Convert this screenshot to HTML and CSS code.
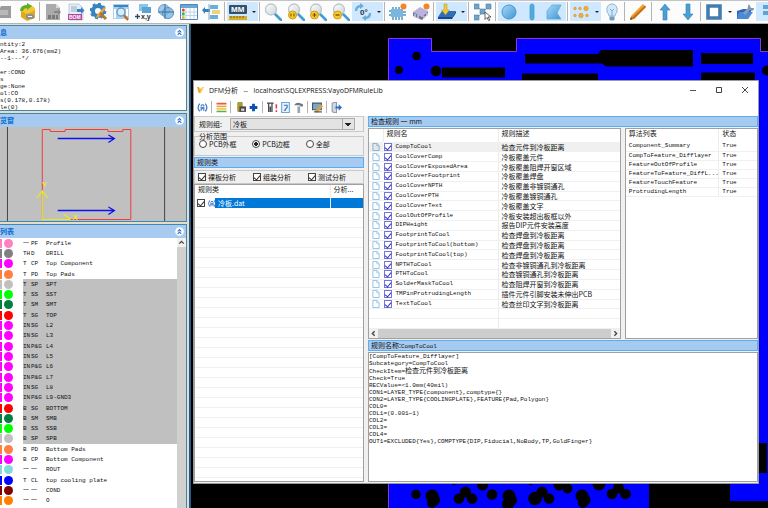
FILE: index.html
```
<!DOCTYPE html>
<html lang="zh-CN">
<head>
    <meta charset="UTF-8">
    <meta name="viewport" content="width=device-width, initial-scale=1.0">
    <title>DFM分析</title>
    <link rel="stylesheet" href="styles.css">
</head>
<body>
    <svg class="defs" width="0" height="0" aria-hidden="true">
        <linearGradient id="lens" x1="0" y1="0" x2="1" y2="1"><stop offset="0" stop-color="#fff"/><stop offset="1" stop-color="#c9d3da"/></linearGradient>
        <linearGradient id="blue" x1="0" y1="0" x2="1" y2="1"><stop offset="0" stop-color="#a9dbf8"/><stop offset="1" stop-color="#3f93d0"/></linearGradient>
        <symbol id="mag" viewBox="0 0 18 18"><path d="M11 11l6 6" stroke="#3f9fd3" stroke-width="2.6" stroke-linecap="round"/><circle cx="7" cy="6.500" r="5.500" fill="url(#lens)" stroke="#bfc4c6" stroke-width="1.300"/></symbol>
        <symbol id="page" viewBox="0 0 8 9"><path d="M.5.5h4.500l2.500 2.500v5.500h-7z" fill="#fff" stroke="#86bce6"/><path d="M4.800.5v2.700h2.700" fill="none" stroke="#86bce6" stroke-width=".7"/></symbol>
        <symbol id="signal" viewBox="0 0 10 10"><path d="M2.500 1.500Q-.5 5 2.500 8.500M7.500 1.500Q10.500 5 7.500 8.500M3.800 8V4M6.200 8V4M3.500 3.500Q5 1.500 6.500 3.500" fill="none" stroke="#3c78c8" stroke-width="1.100"/><circle cx="5" cy="5.500" r="1" fill="#4a7ab8"/></symbol>
        <symbol id="up2" viewBox="0 0 9 9"><circle cx="4.500" cy="4.500" r="4.300" fill="#fff"/><path d="M2.700 4.300l1.800-1.800 1.800 1.800M2.700 6.800l1.800-1.800 1.800 1.800" fill="none" stroke="#2f76c8" stroke-width="1.100"/></symbol>
    </svg>

    <header class="toolbar">
        <button class="tool" aria-label="Open"><svg viewBox="0 0 18 18"><path d="M0 5h5l1-2h10v12H0z" fill="#9c9c9c"/><path d="M5 7h8v5H5z" fill="#b9b9b9"/></svg></button>
        <button class="tool" aria-label="Import"><svg viewBox="0 0 18 18"><path d="M3 6l4-4h6l4 3v9l-8 3-6-3z" fill="#f5c832"/><path d="M3 8l6 3 8-4v8l-8 3-6-4z" fill="#e3a91c"/><path d="M2 8q0-6 7-6V0l5 3-5 4V5q-3 0-4 3z" fill="#57b02e"/><rect x="8" y="11" width="8" height="5" rx="2" fill="#8a9197"/><path d="M10 13.500h4" stroke="#fff"/></svg></button>
        <span class="sep"></span>
        <button class="tool" aria-label="CAD"><svg viewBox="0 0 18 18"><path d="M2 1h10l4 4v12H2z" fill="#ababab"/><path d="M12 1v4h4" fill="#d8d8d8"/><path d="M10 8h4v-2l3 3-3 3v-2h-4z" fill="#888"/><path d="M4 14h10" stroke="#7a7a7a" stroke-width="4" stroke-dasharray="3 1"/></svg></button>
        <button class="tool" aria-label="BOM"><svg viewBox="0 0 18 18"><path d="M2 1h10l4 4v12H2z" fill="#e5edf7" stroke="#9fb4cc" stroke-width=".6"/><path d="M4 4h6M4 6h6M4 8h6" stroke="#96abc5"/><path d="M10 6h4V4l3.500 3.500L14 11V9h-4z" fill="#3d7fc6"/><path d="M1 11h14v6H1z" fill="#b2489b"/><text x="2" y="16" class="icon-text light">BOM</text></svg></button>
        <button class="tool" aria-label="Settings"><svg viewBox="0 0 18 18"><circle cx="8" cy="8" r="5" fill="none" stroke="#3583c2" stroke-width="4"/><circle cx="8" cy="8" r="7.300" fill="none" stroke="#3583c2" stroke-width="2" stroke-dasharray="3 2.700"/><path d="M16 5L9 14l-3 1 1-3 7-8z" fill="#f2a334"/><path d="M10 10l6 6" stroke="#b37732" stroke-width="3"/></svg></button>
        <button class="tool" aria-label="Search"><svg viewBox="0 0 18 18"><path d="M1 1h16v15H1z" fill="#a9d0ec"/><path d="M2 2h14v2H2z" fill="#3e83bb"/><path d="M2 6h2v9H2zM14 6h2v7h-2z" fill="#fff"/><path d="M11 11l5 6" stroke="#c06b23" stroke-width="2.200"/><circle cx="9" cy="9" r="4" fill="#d9eefa" stroke="#5c9dc9" stroke-width="1.300"/></svg></button>
        <button class="tool" aria-label="X,Y"><svg viewBox="0 0 18 18"><path d="M4 1h9v7H4z" fill="#8fc4ea"/><path d="M7 4h9v6H7z" fill="#5ca3d8"/><path d="M0 13.500h5M2.500 11v5" stroke="#234a73" stroke-width="1.300"/><text x="6" y="16" class="icon-text dark mid">x,y</text></svg></button>
        <button class="tool" aria-label="Origin"><svg viewBox="0 0 18 18"><circle cx="7" cy="7" r="5.500" fill="#a1c8e8" stroke="#6fa3cf"/><circle cx="11" cy="10" r="5.500" fill="#7fb4de" fill-opacity=".8" stroke="#5a93c5"/><path d="M8 1v15M1 9h16" stroke="#39719f"/></svg></button>
        <button class="tool" aria-label="Table"><svg viewBox="0 0 18 18"><path d="M.5 1.500h17v15H.5z" fill="#fff" stroke="#4b87b9"/><path d="M1 2h16v3H1z" fill="#6ca7d4"/><path d="M6 5v11M10 5v11M14 5v11M1 9h16M1 12.500h16" stroke="#b0cce3" stroke-width=".8"/><circle cx="3.300" cy="7" r="1.500" fill="#e93e32"/><circle cx="3.300" cy="10.700" r="1.500" fill="#47ae3c"/><circle cx="3.300" cy="14.500" r="1.500" fill="#f3ad24"/></svg></button>
        <button class="tool" aria-label="Arrange"><svg viewBox="0 0 18 18"><path d="M8 2h8v4H8zM8 12h8v4H8z" fill="#66afe0"/><path d="M10 7h8v4h-8z" fill="#f0d27c"/><path d="M0 7l3-3v2h5v3H3v2z" fill="#2e84c3"/><path d="M7 1v16" stroke="#89a5bb"/></svg></button>
        <span class="sep"></span>
        <button class="split active" aria-label="MM"><svg viewBox="0 0 18 18"><rect x="0" y="2" width="18" height="9" rx="1" fill="#30506e"/><text x="2" y="9" class="icon-text light big">MM</text><path d="M0 13h18v4H0z" fill="#d8ae2c"/><path d="M2 13v2M5 13v2M8 13v2M11 13v2M14 13v2" stroke="#7b6012"/></svg><i class="caret"></i></button>
        <span class="sep"></span>
        <button class="tool" aria-label="Zoom"><svg><use href="#mag"/></svg></button>
        <button class="tool" aria-label="Zoom 1:1"><svg viewBox="0 0 18 18"><use href="#mag"/><circle cx="5.500" cy="12" r="4" fill="#f6c92b" stroke="#d49c14"/><path d="M4 10.500v3M7 10.500v3" stroke="#71500b"/></svg></button>
        <button class="tool" aria-label="Zoom in"><svg viewBox="0 0 18 18"><use href="#mag"/><circle cx="5.500" cy="12" r="4" fill="#f6c92b" stroke="#d49c14"/><path d="M3.500 12h4M5.500 10v4" stroke="#71500b" stroke-width="1.200"/></svg></button>
        <button class="tool" aria-label="Zoom out"><svg viewBox="0 0 18 18"><use href="#mag"/><circle cx="5.500" cy="12" r="4" fill="#f6c92b" stroke="#d49c14"/><path d="M3.500 12h4" stroke="#71500b" stroke-width="1.300"/></svg></button>
        <button class="split active" aria-label="Rotate"><svg viewBox="0 0 18 18"><path d="M2 8q0-5 5-5M16 10q0 5-5 5" fill="none" stroke="#6aaed8" stroke-width="2.400"/><path d="M6 0l4 3-4 3zM12 12l-4 3 4 3z" fill="#6aaed8"/><text x="6" y="12" class="icon-text dark big">0°</text></svg><i class="caret"></i></button>
        <span class="sep"></span>
        <button class="tool" aria-label="Component"><svg viewBox="0 0 18 18"><path d="M2 6h12v8H2z" fill="#79b7de"/><path d="M4 4v2M7 4v2M10 4v2M4 14v3M7 14v3M10 14v3M13 14v3M0 8h2M0 12h2M14 9h3M14 12h3" stroke="#4f94c4" stroke-width="1.500"/><circle cx="14.500" cy="3.500" r="3" fill="#f58428"/></svg></button>
        <button class="tool" aria-label="Chip"><svg viewBox="0 0 18 18"><path d="M1 9l7-5 8 4-6 6z" fill="#b9b3de"/><path d="M1 9l9 5v3l-9-4zM10 14l6-6v3l-6 6z" fill="#76719f"/><path d="M3 11v4M6 12v4M12 13v3M15 10v3" stroke="#d7d9e2" stroke-width="1.300"/><circle cx="14.500" cy="3.500" r="3" fill="#f58428"/></svg></button>
        <span class="sep"></span>
        <button class="split active" aria-label="Layer"><svg viewBox="0 0 18 18"><path d="M4 8h14l-4 6H0z" fill="#2f6dbd"/><path d="M0 14h14l4-6v2l-4 6H0z" fill="#1b4886"/><path d="M6 1h3v6h2.500L7.500 12l-4-5H6z" fill="#f2ca35" stroke="#b3902a" stroke-width=".5"/></svg><i class="caret"></i></button>
        <span class="sep"></span>
        <button class="tool" aria-label="Select"><svg viewBox="0 0 18 18"><path d="M3 3l12 12M15 3L3 15" stroke="#a0b5c5"/><path d="M0 1h5v5H0zM12 1h5v5h-5zM0 12h5v5H0zM6 6h5v5H6z" fill="#70a4c8" stroke="#4b7fa5" stroke-width=".6"/><path d="M11 9l6 5h-3l2 3-1.500.5-1.500-3-2 2z" fill="#fff" stroke="#444" stroke-width=".8"/></svg></button>
        <span class="sep"></span>
        <button class="tool active" aria-label="Circle"><svg viewBox="0 0 18 18"><circle cx="9" cy="9" r="7" fill="url(#blue)" stroke="#4795cf"/></svg></button>
        <button class="tool active" aria-label="Line"><svg viewBox="0 0 18 18"><rect x="7" y="1" width="4" height="16" rx="2" fill="#50ace0" stroke="#4395c8" stroke-width=".7"/></svg></button>
        <button class="tool active" aria-label="Polygon"><svg viewBox="0 0 18 18"><path d="M7 2h9l-4 8 4 6H2V8z" fill="url(#blue)" stroke="#5da9dc" stroke-width=".8"/></svg></button>
        <span class="sep"></span>
        <button class="split active" aria-label="Pads"><svg viewBox="0 0 18 18"><g fill="#f4ad33" stroke="#d18b1a" stroke-width=".5"><circle cx="3" cy="5.500" r="1.300"/><circle cx="8" cy="5.500" r="1.300"/><circle cx="14" cy="5.500" r="2.200"/><circle cx="3" cy="12.500" r="1.300"/><circle cx="9" cy="12.500" r="2.200"/><circle cx="15" cy="12.500" r="1.300"/></g></svg><i class="caret"></i></button>
        <button class="tool" aria-label="Light"><svg viewBox="0 0 18 18"><path d="M6 13q0-2-2-4-1-8 5-8t5 8q-2 2-2 4z" fill="#d3e8f9" stroke="#8fb9dc"/><path d="M6.500 13.500h5v3l-1 1h-3l-1-1z" fill="#6f9cc0"/><path d="M7 6l2 2 2-2M9 8v5" fill="none" stroke="#82a9cb"/></svg></button>
        <span class="sep"></span>
        <button class="tool" aria-label="Draw"><svg viewBox="0 0 18 18"><path d="M2 13L14 1l3 3L5 16l-4 1z" fill="#f3a02b"/><path d="M5 16L17 4l-1-1.500L3 14.500z" fill="#c3701a"/><path d="M1 17l1-3 2 2z" fill="#5a4630"/></svg></button>
        <span class="sep"></span>
        <button class="tool" aria-label="Up"><svg viewBox="0 0 18 18"><path d="M9 1l5 6h-3v10H7V7H4z" fill="#4a9fd5" stroke="#347fb1" stroke-width=".6"/></svg></button>
        <button class="tool" aria-label="Down"><svg viewBox="0 0 18 18"><path d="M9 17l5-6h-3V1H7v10H4z" fill="#4a9fd5" stroke="#347fb1" stroke-width=".6"/></svg></button>
        <span class="sep"></span>
        <button class="split" aria-label="Frame"><svg viewBox="0 0 18 18"><path d="M3 3h12v12H3z" fill="#fff" stroke="#427cb3" stroke-width="3.600"/></svg><i class="caret"></i></button>
        <button class="tool" aria-label="Options"><svg viewBox="0 0 18 18"><path d="M1 8l6-2h9l-4 10H1z" fill="#2e66bd"/><path d="M3 9h14l-5 7H1z" fill="#4c8ad8"/><path d="M8 11l6-6" stroke="#8aa0b5" stroke-width="3"/><path d="M13 1q-3 4 1 6t4-2l-3 0-1-2z" fill="#7f97ae"/></svg></button>
        <button class="tool active" aria-label="More"><svg viewBox="0 0 18 18"><path d="M4 2h14v4H4zM4 8h14v4H4z" fill="#61a3d4"/></svg></button>
    </header>

    <main class="workspace">
        <aside class="side">
            <section class="panel">
                <h2>息<svg><use href="#up2"/></svg></h2>
                <pre class="info">ntity:2
Area: 36.676(mm2)
--1---*/

er:COND
s
ge:None
ol:CO
s(0.178,0.178)
le(0)</pre>
            </section>
            <section class="panel">
                <h2>览窗<svg><use href="#up2"/></svg></h2>
                <svg class="preview" viewBox="0 127 187 94" preserveAspectRatio="none">
                    <path d="M7.500 127v94M165.500 127v94" stroke="#444"/>
                    <path d="M42.500 219.500v-90h8v2h15v-2h43v2h15v-2h8v90z" fill="none" stroke="#f03c3c"/>
                    <path d="M58 138.500h57M109 135l6 3.500-6 4M58 210.500h57M109 207l6 3.500-6 4" fill="none" stroke="#1010ee" stroke-width="1.300"/>
                    <path d="M71 219.500H42.500V191M37 198l5.500-7 5.500 7M64 214l7 5.500" fill="none" stroke="#e8e82a" stroke-width="1.200"/>
                    <text x="42" y="187" class="axis">Y</text><text x="73" y="220" class="axis">X</text>
                </svg>
            </section>
            <section class="panel layers">
                <h2>列表<svg><use href="#up2"/></svg></h2>
                <div class="layer-box">
                    <ul class="layer-list">
                        <li class="pink"><span>一</span><span>PF</span><b>Profile</b></li>
                        <li class="gray"><span>TH</span><span>D</span><b>DRILL</b></li>
                        <li class="magenta"><span>T</span><span>CP</span><b>Top Component</b></li>
                        <li class="coral"><span>T</span><span>PD</span><b>Top Pads</b></li>
                        <li class="silver on"><span>T</span><span>SP</span><b>SPT</b></li>
                        <li class="lime on"><span>T</span><span>SS</span><b>SST</b></li>
                        <li class="green on"><span>T</span><span>SM</span><b>SMT</b></li>
                        <li class="red on"><span>T</span><span>SG</span><b>TOP</b></li>
                        <li class="magenta on"><span>IN</span><span>SG</span><b>L2</b></li>
                        <li class="magenta on"><span>IN</span><span>SG</span><b>L3</b></li>
                        <li class="magenta on"><span>IN</span><span>P&amp;G</span><b>L4</b></li>
                        <li class="magenta on"><span>IN</span><span>SG</span><b>L5</b></li>
                        <li class="magenta on"><span>IN</span><span>P&amp;G</span><b>L6</b></li>
                        <li class="magenta on"><span>IN</span><span>P&amp;G</span><b>L7</b></li>
                        <li class="magenta on"><span>IN</span><span>SG</span><b>L8</b></li>
                        <li class="magenta on"><span>IN</span><span>P&amp;G</span><b>L9-GND3</b></li>
                        <li class="red on"><span>B</span><span>SG</span><b>BOTTOM</b></li>
                        <li class="green on"><span>B</span><span>SM</span><b>SMB</b></li>
                        <li class="lime on"><span>B</span><span>SS</span><b>SSB</b></li>
                        <li class="silver on"><span>B</span><span>SP</span><b>SPB</b></li>
                        <li class="coral"><span>B</span><span>PD</span><b>Bottom Pads</b></li>
                        <li class="magenta"><span>B</span><span>CP</span><b>Bottom Component</b></li>
                        <li class="aqua"><span>一</span><span>一</span><b>ROUT</b></li>
                        <li class="blue"><span>T</span><span>CL</span><b>top cooling plate</b></li>
                        <li class="maroon"><span>一</span><span>一</span><b>COND</b></li>
                        <li class="orange"><span>一</span><span>一</span><b>O</b></li>
                    </ul>
                    <div class="vscroll"><svg viewBox="0 0 8 8"><path d="M2 5l2-2 2 2" fill="none" stroke="#444" stroke-width="1.200"/></svg></div>
                </div>
            </section>
        </aside>

        <div class="canvas">
            <svg class="board" viewBox="191 24 577 484" preserveAspectRatio="none">
                <path d="M388.500 508V38.500h43v13h85v-13h244v13H768V501h-38v-17h-81v24z" fill="#00f"/>
                <path d="M388.500 508V38.500h43v13h85v-13h244v13H768" fill="none" stroke="#9038c8"/>
                <g>
                    <circle cx="416.500" cy="56" r="4.300"/><circle cx="399" cy="70" r="4"/><circle cx="436" cy="71" r="5.300"/><circle cx="767" cy="70.500" r="5"/>
                    <path d="M442 67.500h63v10h-63zM525 54h73l3-4h92v16.500h-87l-4-3h-77zM522 73.500h76V80h-76zM701 53h52v11h-52zM701 72.500h54V80h-54zM757 443h10v30h-10z"/>
                    <circle cx="416" cy="494.500" r="4.700"/><circle cx="432" cy="496" r="6.500"/><circle cx="434" cy="500" r="6"/><circle cx="432" cy="503" r="5"/>
                    <circle cx="465.500" cy="492" r="5.500"/><circle cx="459" cy="498.500" r="5.300"/><circle cx="472" cy="498.500" r="5.300"/><circle cx="482.500" cy="485" r="5.500"/><circle cx="454" cy="480" r="5"/><circle cx="492" cy="494.500" r="5.300"/>
                    <circle cx="509" cy="496" r="6.500"/><circle cx="511" cy="500" r="6"/><circle cx="508" cy="504" r="6"/>
                    <circle cx="542" cy="492" r="5.500"/><circle cx="535" cy="498.500" r="6.700"/><circle cx="549" cy="498.500" r="5.300"/><circle cx="531" cy="480" r="5"/><circle cx="559" cy="485" r="5.500"/><circle cx="567.500" cy="488.500" r="5"/>
                    <circle cx="582" cy="496" r="6.500"/><circle cx="585" cy="500" r="5.500"/><circle cx="583" cy="503" r="5"/><circle cx="599" cy="484" r="6.500"/>
                    <circle cx="618.500" cy="488" r="5.500"/><circle cx="612" cy="494" r="5.300"/><circle cx="625.500" cy="494" r="5.300"/>
                </g>
            </svg>

            <section class="dialog">
                <div class="titlebar">
                    <svg viewBox="0 0 9 9"><path d="M0 1l2 7h2l1-3-2-4v3L2 1z" fill="#f2a41f"/><path d="M4 8l4-7H6L3.500 5z" fill="#f5cf35"/></svg>
                    <h1>DFM分析 &nbsp; -- &nbsp; localhost\SQLEXPRESS:VayoDFMRuleLib</h1>
                    <button aria-label="Minimize"><svg viewBox="0 0 8 8"><path d="M1 4.500h6" stroke="#555"/></svg></button>
                    <button aria-label="Maximize"><svg viewBox="0 0 8 8"><path d="M1.500 1.500h5v5h-5z" fill="none" stroke="#444"/></svg></button>
                    <button aria-label="Close"><svg viewBox="0 0 8 8"><path d="M1 1l6 6M7 1L1 7" stroke="#444"/></svg></button>
                </div>
                <div class="dialog-tools">
                    <button aria-label="Run"><svg><use href="#signal"/></svg></button>
                    <span class="sep"></span>
                    <button aria-label="Rules"><svg viewBox="0 0 10 10"><path d="M.5 1.500h9" stroke="#ee5447" stroke-width="1.600"/><path d="M.5 4h9" stroke="#f0a03c" stroke-width="1.400"/><path d="M.5 6.300h9" stroke="#e8c636" stroke-width="1.400"/><path d="M.5 8.600h9" stroke="#5cae50" stroke-width="1.400"/></svg></button>
                    <span class="sep"></span>
                    <button aria-label="Save"><svg viewBox="0 0 10 10"><rect x="2" y="0" width="5" height="9" rx="1" fill="#a99c3a"/><path d="M4 4h6v5H4z" fill="#4a4a44"/><path d="M5.500 6h3v2h-3z" fill="#ddd"/></svg></button>
                    <button aria-label="Add"><svg viewBox="0 0 10 10"><path d="M5 1.500v7M1.500 5h7" stroke="#0b4fb3" stroke-width="2.600"/></svg></button>
                    <span class="sep"></span>
                    <button aria-label="Sort"><svg viewBox="0 0 10 10"><path d="M0 1h6M1.500 1v8M4.500 1v8M3 4v5" stroke="#45484d" stroke-width="1.200"/><path d="M8.500 2v4M8.500 7.500v1.500" stroke="#d83c3c" stroke-width="1.400"/></svg></button>
                    <button aria-label="Report"><svg viewBox="0 0 10 10"><path d="M1.500.5h7v9h-7z" fill="#eaf4ff" stroke="#6ca5dc"/><path d="M3.500 3h3v2l-2 2M3.500 7.500h2" fill="none" stroke="#3871bd"/></svg></button>
                    <button aria-label="Build"><svg viewBox="0 0 10 10"><path d="M1 3q2-3 5-2l3 1v2H7L6 3H3z" fill="#72797e"/><path d="M4 4h2.500v6H4z" fill="#9aa5ac"/></svg></button>
                    <span class="sep"></span>
                    <button aria-label="Edit"><svg viewBox="0 0 10 10"><path d="M.5 1h8v6h-8z" fill="#7fa6c7" stroke="#43576a"/><path d="M2 9l6-7 2 2-5 5.500z" fill="#d7a347"/><path d="M2 9h7" stroke="#444"/></svg></button>
                    <span class="sep"></span>
                    <button aria-label="Exit"><svg viewBox="0 0 10 10"><path d="M1 1l4-1v10L1 9z" fill="#cfd8df" stroke="#7c8c9b" stroke-width=".8"/><path d="M4 4h3V2l3 3-3 3V6H4z" fill="#2d6dc4"/></svg></button>
                </div>

                <div class="dialog-body">
                    <div class="left">
                        <div class="frame group-row">
                            <label for="group">规则组:</label>
                            <select id="group"><option>冷板</option></select>
                        </div>
                        <fieldset>
                            <legend>分析范围</legend>
                            <label><input type="radio" name="scope">PCB外框</label>
                            <label><input type="radio" name="scope" checked>PCB边框</label>
                            <label><input type="radio" name="scope">全部</label>
                        </fieldset>
                        <h3>规则类</h3>
                        <div class="frame checks">
                            <label><input type="checkbox" checked>裸板分析</label>
                            <label><input type="checkbox" checked>组装分析</label>
                            <label><input type="checkbox" checked>测试分析</label>
                        </div>
                        <div class="box class-list">
                            <table>
                                <colgroup><col><col class="col-analyse"></colgroup>
                                <thead><tr><th>规则类</th><th>分析...</th></tr></thead>
                                <tbody><tr><td><label><input type="checkbox" checked><svg><use href="#signal"/></svg><span>冷板.dat</span></label></td><td></td></tr></tbody>
                            </table>
                        </div>
                    </div>

                    <div class="right">
                        <h3>检查规则 一 mm</h3>
                        <div class="lists">
                            <div class="box rules">
                                <table>
                                    <colgroup><col class="col-icon"><col class="col-name"><col></colgroup>
                                    <thead><tr><th></th><th>规则名</th><th>规则描述</th></tr></thead>
                                    <tbody>
                                        <tr class="current"><td><svg><use href="#page"/></svg></td><td><label><input type="checkbox" checked>CompToCool</label></td><td>检查元件到冷板距离</td></tr>
                                        <tr><td><svg><use href="#page"/></svg></td><td><label><input type="checkbox" checked>CoolCoverComp</label></td><td>冷板覆盖元件</td></tr>
                                        <tr><td><svg><use href="#page"/></svg></td><td><label><input type="checkbox" checked>CoolCoverExposedArea</label></td><td>冷板覆盖阻焊开窗区域</td></tr>
                                        <tr><td><svg><use href="#page"/></svg></td><td><label><input type="checkbox" checked>CoolCoverFootprint</label></td><td>冷板覆盖焊盘</td></tr>
                                        <tr><td><svg><use href="#page"/></svg></td><td><label><input type="checkbox" checked>CoolCoverNPTH</label></td><td>冷板覆盖非镀铜通孔</td></tr>
                                        <tr><td><svg><use href="#page"/></svg></td><td><label><input type="checkbox" checked>CoolCoverPTH</label></td><td>冷板覆盖镀铜通孔</td></tr>
                                        <tr><td><svg><use href="#page"/></svg></td><td><label><input type="checkbox" checked>CoolCoverText</label></td><td>冷板覆盖文字</td></tr>
                                        <tr><td><svg><use href="#page"/></svg></td><td><label><input type="checkbox" checked>CoolOutOfProfile</label></td><td>冷板安装超出板框以外</td></tr>
                                        <tr><td><svg><use href="#page"/></svg></td><td><label><input type="checkbox" checked>DIPHeight</label></td><td>报告DIP元件安装高度</td></tr>
                                        <tr><td><svg><use href="#page"/></svg></td><td><label><input type="checkbox" checked>FootprintToCool</label></td><td>检查焊盘到冷板距离</td></tr>
                                        <tr><td><svg><use href="#page"/></svg></td><td><label><input type="checkbox" checked>FootprintToCool(bottom)</label></td><td>检查焊盘到冷板距离</td></tr>
                                        <tr><td><svg><use href="#page"/></svg></td><td><label><input type="checkbox" checked>FootprintToCool(top)</label></td><td>检查焊盘到冷板距离</td></tr>
                                        <tr><td><svg><use href="#page"/></svg></td><td><label><input type="checkbox" checked>NPTHToCool</label></td><td>检查非镀铜通孔到冷板距离</td></tr>
                                        <tr><td><svg><use href="#page"/></svg></td><td><label><input type="checkbox" checked>PTHToCool</label></td><td>检查镀铜通孔到冷板距离</td></tr>
                                        <tr><td><svg><use href="#page"/></svg></td><td><label><input type="checkbox" checked>SolderMaskToCool</label></td><td>检查阻焊开窗到冷板距离</td></tr>
                                        <tr><td><svg><use href="#page"/></svg></td><td><label><input type="checkbox" checked>TMPinProtrudingLength</label></td><td>插件元件引脚安装未伸出PCB</td></tr>
                                        <tr><td><svg><use href="#page"/></svg></td><td><label><input type="checkbox" checked>TextToCool</label></td><td>检查丝印文字到冷板距离</td></tr>
                                        <tr><td></td><td></td><td></td></tr>
                                        <tr><td></td><td></td><td></td></tr>
                                    </tbody>
                                </table>
                                <div class="hscroll">
                                    <svg viewBox="0 0 8 8"><path d="M5 2L3 4l2 2" fill="none" stroke="#444" stroke-width="1.200"/></svg>
                                    <span class="thumb"></span>
                                    <svg viewBox="0 0 8 8"><path d="M3 2l2 2-2 2" fill="none" stroke="#444" stroke-width="1.200"/></svg>
                                </div>
                            </div>
                            <div class="box algos">
                                <table>
                                    <colgroup><col class="col-algo"><col></colgroup>
                                    <thead><tr><th>算法列表</th><th>状态</th></tr></thead>
                                    <tbody>
                                        <tr><td>Component_Summary</td><td>True</td></tr>
                                        <tr><td>CompToFeature_Difflayer</td><td>True</td></tr>
                                        <tr><td>FeatureOutOfProfile</td><td>True</td></tr>
                                        <tr><td>FeatureToFeature_DiffL...</td><td>True</td></tr>
                                        <tr><td>FeatureTouchFeature</td><td>True</td></tr>
                                        <tr><td>ProtrudingLength</td><td>True</td></tr>
                                    </tbody>
                                </table>
                            </div>
                        </div>
                        <h3>规则名称:<span>CompToCool</span></h3>
                        <pre class="box detail">[CompToFeature_Difflayer]
Subcategory=CompToCool
CheckItem=<span>检查元件到冷板距离</span>
Check=True
RECValue=&lt;1.0mm(40mil)
CON1=LAYER_TYPE{component},comptype{}
CON2=LAYER_TYPE{COOLINGPLATE},FEATURE{Pad,Polygon}
COL0=
COL1=(0.001~1)
COL2=
COL3=
COL4=
OUT1=EXCLUDED{Yes},COMPTYPE{DIP,Fiducial,NoBody,TP,GoldFinger}</pre>
                    </div>
                </div>
            </section>
        </div>
    </main>
</body>
</html>
```
FILE: styles.css
```
* { box-sizing: border-box; }
body {
    margin: 0;
    height: 100vh;
    display: flex;
    flex-direction: column;
    overflow: hidden;
    background: #000;
    color: #111;
    font-family: "Liberation Mono", "Noto Sans CJK SC", monospace;
    font-size: 6px;
    line-height: 7px;
}
h1, h2, h3, ul, pre { margin: 0; padding: 0; }
button {
    border: none;
    padding: 0;
    background: none;
    font: inherit;
}
svg { display: block; }
.defs { position: absolute; }

/* main toolbar */
.toolbar {
    display: flex;
    flex: none;
    height: 24px;
    margin: 0 -11px 0 -7px;
    padding: 1px 0 2px;
    background: #fcfcfc;
    border-top: 1px solid #c4c4c4;
    border-bottom: 1px solid #b5b5b5;
}
.tool, .split {
    display: flex;
    align-items: center;
    justify-content: center;
    flex: 1 0 22px;
}
.split {
    flex: none;
    width: 31px;
    gap: 5px;
}
.tool svg, .split svg { width: 18px; height: 18px; }
.active { background: #cde8ff; }
.caret {
    border: 2px solid transparent;
    border-top-color: #222;
    border-bottom: none;
}
.sep {
    flex: none;
    width: 1px;
    margin: 0 2px 0 1px;
    background: #b4b4b4;
}
.icon-text {
    font: bold 5px "Liberation Sans", sans-serif;
}
.icon-text.mid { font-size: 7px; }
.icon-text.big { font-size: 8px; }
.light { fill: #fff; }
.dark { fill: #26313b; }

.workspace {
    flex: 1;
    display: flex;
    min-height: 0;
}

/* left panels */
.side {
    width: 191px;
    flex: none;
    display: flex;
    flex-direction: column;
    gap: 2px;
    padding: 1px 2px 0 0;
    background: #e4dfc4;
    border-right: 2px solid #27588c;
}
.panel {
    border: 1px solid #3f87b5;
    border-left: none;
}
.panel h2 {
    display: flex;
    align-items: center;
    justify-content: space-between;
    height: 13px;
    padding-right: 2px;
    background: #a6caf0;
    color: #0a6cd0;
    font: bold 7px/13px "Noto Sans CJK SC", sans-serif;
}
.panel h2 svg { width: 9px; height: 9px; }
.info {
    height: 71px;
    padding-top: 2px;
    background: #fff;
    font-family: inherit;
}
.preview {
    width: 100%;
    height: 94px;
    background: #c0c0c0;
}
.axis {
    font: bold 8px "Liberation Sans", sans-serif;
    fill: #e8e82a;
}
.layers {
    flex: 1;
    display: flex;
    flex-direction: column;
    min-height: 0;
    border-bottom: none;
}
.layer-box {
    flex: 1;
    display: flex;
    min-height: 0;
    background: #fff;
}
.layer-list {
    flex: 1;
    display: grid;
    grid-auto-rows: 1fr;
    padding-bottom: 2px;
    list-style: none;
}
.layer-list li {
    display: grid;
    grid-template-columns: 2px 21px 8px 15px 1fr;
    align-items: center;
    min-height: 0;
    white-space: nowrap;
}
.layer-list li::before,
.layer-list li::after {
    content: "";
    grid-row: 1;
    height: 9px;
    background: var(--ink);
}
.layer-list li::after {
    grid-column: 2;
    width: 9px;
    margin-left: 2px;
    border-radius: 50%;
}
.layer-list span:nth-of-type(1) { grid-column: 3; grid-row: 1; }
.layer-list span:nth-of-type(2) { grid-column: 4; grid-row: 1; }
.layer-list b { grid-column: 5; grid-row: 1; font-weight: normal; }
.layer-list .on { background: linear-gradient(to right, #fff 23px, #c0c0c0 23px); }
.pink { --ink: #ff80c0; }
.gray { --ink: #808080; }
.magenta { --ink: #ff00ff; }
.coral { --ink: #ff8040; }
.silver { --ink: #c0c0c0; }
.lime { --ink: #00ff00; }
.green { --ink: #008040; }
.red { --ink: #ff0000; }
.aqua { --ink: #80dcdc; }
.blue { --ink: #0000ff; }
.maroon { --ink: #800000; }
.orange { --ink: #ff8000; }
.vscroll {
    width: 9px;
    background: #d0d0d0;
}
.vscroll svg {
    width: 9px;
    height: 9px;
    background: #f0f0f0;
}

/* board view */
.canvas {
    flex: 1;
    position: relative;
    min-width: 0;
    background: #000;
}
.board { width: 100%; height: 100%; }

/* dialog window floating over the board */
.dialog {
    position: absolute;
    top: 56px;
    right: 9px;
    bottom: 24px;
    left: 2px;
    display: flex;
    flex-direction: column;
    background: #f0f0f0;
    border: 1px solid #9a9a9a;
}
.titlebar {
    display: flex;
    align-items: center;
    height: 17px;
    padding-left: 3px;
    background: #fff;
}
.titlebar svg { width: 8px; height: 8px; }
.titlebar h1 {
    flex: 1;
    margin-left: 4px;
    font: 7px "Open Sans", "Noto Sans CJK SC", sans-serif;
    white-space: nowrap;
}
.titlebar button {
    display: flex;
    justify-content: center;
    width: 26px;
}
.dialog-tools {
    display: flex;
    align-items: center;
    gap: 2px;
    height: 18px;
    padding: 0 3px;
    background: #fff;
}
.dialog-tools svg { width: 11px; height: 11px; }
.dialog-tools .sep { height: 12px; }
.dialog-body {
    flex: 1;
    display: flex;
    gap: 4px;
    min-height: 0;
    padding-bottom: 1px;
    font-family: "Noto Sans CJK SC", sans-serif;
    font-size: 7px;
}
.left {
    width: 170px;
    flex: none;
    display: flex;
    flex-direction: column;
}
.right {
    flex: 1;
    min-width: 0;
    display: flex;
    flex-direction: column;
    gap: 1px;
}
h3 {
    flex: none;
    height: 11px;
    padding-left: 2px;
    background: #a6caf0;
    border: 1px solid #56aef5;
    font: 7px/9px "Noto Sans CJK SC", sans-serif;
}
h3 span {
    font-family: "Liberation Mono", monospace;
    font-size: 6px;
}
.frame {
    display: flex;
    align-items: center;
    border: 1px solid #c8c8c8;
}
.group-row {
    height: 16px;
    padding: 0 8px 0 4px;
    gap: 8px;
}
label {
    display: flex;
    align-items: center;
    white-space: nowrap;
}
select {
    appearance: none;
    flex: 1;
    height: 12px;
    padding: 0 2px;
    border: 1px solid #adadad;
    border-radius: 0;
    color: #111;
    background:
        conic-gradient(from -45deg at 50% 100%, #222 90deg, transparent 0) right 3px center / 6px 3px no-repeat,
        linear-gradient(#aaa, #aaa) right 11px center / 1px 100% no-repeat,
        #e3e3e3;
    font: 7px "Noto Sans CJK SC", sans-serif;
}
fieldset {
    display: grid;
    grid-template-columns: 1fr 1fr 1fr;
    min-width: 0;
    height: 23px;
    margin: 1px 0;
    padding: 0 4px;
    border: 1px solid #c8c8c8;
}
legend { padding: 0; }
input {
    appearance: none;
    flex: none;
    width: 8px;
    height: 8px;
    margin: 0 2px 0 0;
    border: 1px solid #444;
    background: #fff;
}
input[type="radio"] { border-radius: 50%; }
input[type="radio"]:checked { background: radial-gradient(#222 2px, #fff 2px); }
input[type="checkbox"]:checked::before {
    content: "";
    display: block;
    width: 3px;
    height: 5px;
    margin: 0 auto;
    border: solid #333;
    border-width: 0 1px 1px 0;
    transform: rotate(40deg);
}
.checks {
    height: 14px;
    margin-top: 2px;
    padding-left: 3px;
}
.checks label { flex: 1; }
.box {
    background: #fff;
    border: 1px solid #a0a0a0;
}
table {
    width: 100%;
    border-collapse: collapse;
    table-layout: fixed;
}
th, td {
    padding: 0;
    text-align: left;
    font-weight: normal;
    white-space: nowrap;
    overflow: hidden;
}
td { border-bottom: 1px solid #f0f0f0; }
th + th, td + td { border-left: 1px solid #ececec; }
th {
    height: 13px;
    padding: 1px 3px 0;
    vertical-align: top;
}

.class-list {
    flex: 1;
    background: repeating-linear-gradient(#fff 0 9px, #f0f0f0 9px 10px) 0 13px;
}
.class-list thead { background: #fff; }
.class-list td { height: 10px; border-bottom: none; background: #0078d7; color: #fff; }
.class-list td:first-child { background: linear-gradient(to right, #fff 20px, #0078d7 20px); }
.class-list td svg { width: 10px; height: 9px; margin-right: 1px; }
.class-list input { margin-left: 2px; }
.col-analyse { width: 33px; }

.lists {
    display: flex;
    gap: 4px;
    height: 211px;
}
.rules {
    flex: 65 1 0;
    display: flex;
    flex-direction: column;
    min-width: 0;
}
.rules table { flex: 1; }
.rules td { height: 9px; line-height: 8px; }
.rules td svg { width: 8px; height: 8px; margin-left: 3px; }
.rules td:nth-child(2) {
    border-left-color: #fff;
    font: 6px/8px "Liberation Mono", monospace;
}
.rules input { border-color: #7575d8; margin-right: 4px; }
.rules input[type="checkbox"]:checked::before { border-color: #3333c4; }
.rules td:nth-child(3) { padding-left: 3px; }
.current { background: #f0f0f0; }
.current use { filter: brightness(.9); }
.col-icon { width: 14px; }
.col-name { width: 115px; }
.hscroll {
    flex: none;
    display: flex;
    height: 9px;
    background: #f0f0f0;
}
.hscroll svg { width: 9px; height: 9px; }
.hscroll .thumb { flex: 1; background: #cdcdcd; }
.algos { flex: 34 1 0; min-width: 0; }
.algos td {
    height: 9px;
    padding: 0 3px;
    font: 6px/8px "Liberation Mono", monospace;
}
.col-algo { width: 93px; }
.detail {
    flex: 1;
    min-height: 0;
    overflow: hidden;
    font: 6px/7px "Liberation Mono", monospace;
}
.detail span { font: 7px/7px "Noto Sans CJK SC", sans-serif; }
```
